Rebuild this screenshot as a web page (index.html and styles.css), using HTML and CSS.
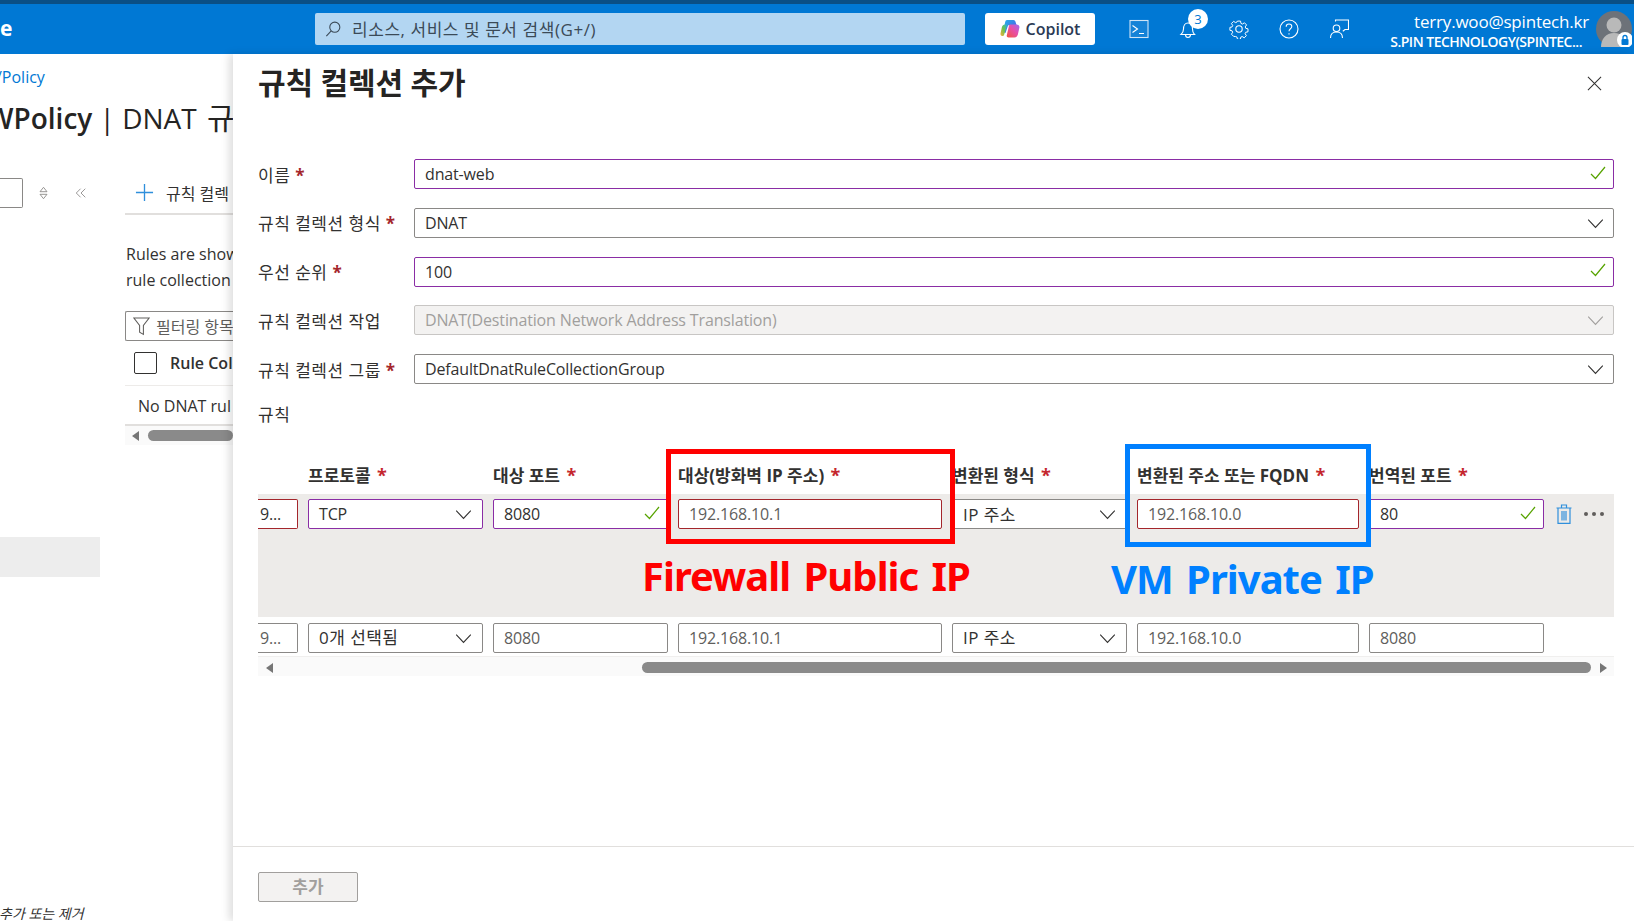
FILE: index.html
```html
<!DOCTYPE html>
<html lang="ko">
<head>
<meta charset="utf-8">
<title>규칙 컬렉션 추가</title>
<link rel="stylesheet" href="styles.css">
</head>
<body>
<div class="strip"></div>
<header class="topbar">
  <div class="brand">e</div>
  <div class="search">
    <svg class="search-icon" viewBox="0 0 20 20"><circle cx="12" cy="8" r="5.6"/><path d="M8 12.2 2.6 18"/></svg>
    <span>리소스, 서비스 및 문서 검색(G+/)</span>
  </div>
  <button class="copilot">
    <svg viewBox="0 0 20 20" class="copilot-logo">
      <defs>
        <linearGradient id="cg1" x1="0" y1="0" x2="1" y2="1"><stop offset="0" stop-color="#1fb6e8"/><stop offset=".55" stop-color="#3f7be8"/><stop offset="1" stop-color="#7a5be0"/></linearGradient>
        <linearGradient id="cg2" x1="0" y1="1" x2="1" y2="0"><stop offset="0" stop-color="#f7b23b"/><stop offset=".5" stop-color="#6cc24a"/><stop offset="1" stop-color="#1fb6e8"/></linearGradient>
        <linearGradient id="cg3" x1="0" y1="1" x2="1" y2="0"><stop offset="0" stop-color="#f0573f"/><stop offset=".55" stop-color="#e84fa8"/><stop offset="1" stop-color="#9b6bf0"/></linearGradient>
      </defs>
      <path d="M7 1h6.500c1 0 1.600.7 2 1.800l1 3.200H9.500C8.400 6 8 6.600 7.700 7.500L5.500 14 3 13 5.200 3C5.500 1.800 6 1 7 1Z" fill="url(#cg1)"/>
      <path d="M5.200 5.500 8 5.500C7 6 6.700 7 6.400 8L4.200 15.500c-.3 1-.9 1.500-1.900 1.500C1 17 .3 15.800.5 14.500L1.800 8.500C2.200 6.700 3.500 5.500 5.200 5.500Z" fill="url(#cg2)"/>
      <path d="M10 5.500h6.200C18 5.500 19.800 6.500 19.400 8.500L18 15c-.4 1.700-1.600 3.500-3.500 3.500H8.500c-1.300 0-2-1-1.700-2.200L8.700 8C9 6.600 9.200 5.500 10 5.500Z" fill="url(#cg3)"/>
    </svg>
    <span>Copilot</span>
  </button>
  <div class="tools">
    <span class="tool">
      <svg viewBox="0 0 20 20"><rect x="1" y="1.500" width="18" height="17"/><path d="M3.500 6.500 8.500 10l-5 3.500M10 14.500h5"/></svg>
    </span>
    <span class="tool">
      <svg viewBox="0 0 20 20"><path d="M2 15.500h13.500c-1.700-1.500-2-3-2-5.500 0-3-1.500-6-4.500-6S4.500 7 4.500 10c0 2.500-.8 4-2.500 5.500ZM6.500 15.500c0 2 1 3 2.500 3s2.500-1 2.500-3"/></svg>
      <span class="badge">3</span>
    </span>
    <span class="tool">
      <svg viewBox="0 0 20 20"><circle cx="10" cy="10" r="3.200"/><path d="M8.300 1.200h3.400l.5 2.600 1.600.7 2.300-1.400 2.300 2.400-1.500 2.200.7 1.600 2.400.5v3.300l-2.500.5-.7 1.600 1.400 2.200-2.400 2.400-2.200-1.400-1.600.6-.5 2.500H8.300l-.5-2.500-1.600-.6L4 18.200l-2.400-2.400L3 13.600l-.7-1.600-2.400-.5V8.200l2.400-.5.7-1.600-1.400-2.200L4 1.500l2.200 1.400 1.600-.7z" transform="translate(1 1) scale(.9)"/></svg>
    </span>
    <span class="tool">
      <svg viewBox="0 0 20 20"><circle cx="10" cy="10" r="9"/><path d="M7.200 7.700C7.200 5.900 8.400 5 10 5s2.800 1 2.800 2.500c0 2.300-2.800 2.300-2.800 4.800"/><path d="M10 14.300v1.200"/></svg>
    </span>
    <span class="tool">
      <svg viewBox="0 0 20 20"><circle cx="7.500" cy="9.300" r="3.300"/><path d="M1.500 19c0-3.800 2.500-6 6-6s6 2.200 6 6M6.500 2.500V1h13v9.500H16l-2.200 1.800"/></svg>
    </span>
  </div>
  <div class="account">
    <div class="email">terry.woo@spintech.kr</div>
    <div class="org">S.PIN TECHNOLOGY(SPINTEC...</div>
  </div>
  <div class="avatar">
    <svg viewBox="0 0 36 36">
      <circle cx="18" cy="18" r="18" fill="#6d7279"/>
      <circle cx="18" cy="14" r="7.500" fill="#b9b9b9"/>
      <path d="M5 36c0-8 5-14 13-14s13 6 13 14z" fill="#b9b9b9"/>
      <circle cx="29" cy="29" r="8" fill="#fff"/>
      <rect x="25.500" y="28" width="7" height="6" rx="1" fill="#0078d4"/>
      <path d="M27 28v-1.500a2 2 0 0 1 4 0V28" fill="none" stroke="#0078d4" stroke-width="1.300"/>
    </svg>
  </div>
</header>

<main class="workspace">
  <section class="blade">
    <div class="crumb">/Policy</div>
    <h1 class="blade-title"><b>WPolicy</b> | DNAT <span class="title-ko">규</span></h1>
    <div class="blade-grid">
      <nav class="side">
        <div class="side-top">
          <span class="side-input"></span>
          <svg class="side-sort" viewBox="0 0 10 16"><path d="M5 1.500 9 6.500H1zM5 14.500 1 9.500h8z"/></svg>
          <svg class="side-collapse" viewBox="0 0 14 12"><path d="M6.500 1 1.500 6l5 5M12 1 7 6l5 5"/></svg>
        </div>
        <div class="side-sel"></div>
        <div class="side-note">추가 또는 제거</div>
      </nav>
      <div class="blade-body">
        <div class="cmdbar">
          <svg class="plus" viewBox="0 0 20 20"><path d="M10 1v18M1 10h18"/></svg>
          <span>규칙 컬렉</span>
        </div>
        <p class="blurb">Rules are show<br>rule collection</p>
        <div class="filter">
          <svg viewBox="0 0 16 18"><path d="M.8 1h14.400L9.800 8v8.500l-3.600-2V8z"/></svg>
          <span>필터링 항목</span>
        </div>
        <div class="list-head"><span class="check"></span><b>Rule Col</b></div>
        <div class="list-empty">No DNAT rul</div>
        <div class="hscroll small">
          <span class="arrow left"></span>
          <span class="thumb"></span>
        </div>
      </div>
    </div>
  </section>

  <section class="panel">
    <div class="panel-head">
      <h2>규칙 컬렉션 추가</h2>
      <svg class="close" viewBox="0 0 16 16"><path d="M1 1l14 14M15 1 1 15"/></svg>
    </div>
    <form class="form">
      <div class="field">
        <label>이름 <i>*</i></label>
        <div class="input valid"><span>dnat-web</span><svg class="ok" viewBox="0 0 16 14"><path d="M1 8l4.500 4.500L15 1"/></svg></div>
      </div>
      <div class="field">
        <label>규칙 컬렉션 형식 <i>*</i></label>
        <div class="input"><span>DNAT</span><svg class="chev" viewBox="0 0 16 10"><path d="M.7.7 8 8.500 15.300.7"/></svg></div>
      </div>
      <div class="field">
        <label>우선 순위 <i>*</i></label>
        <div class="input valid"><span>100</span><svg class="ok" viewBox="0 0 16 14"><path d="M1 8l4.500 4.500L15 1"/></svg></div>
      </div>
      <div class="field">
        <label>규칙 컬렉션 작업</label>
        <div class="input disabled"><span>DNAT(Destination Network Address Translation)</span><svg class="chev" viewBox="0 0 16 10"><path d="M.7.7 8 8.500 15.300.7"/></svg></div>
      </div>
      <div class="field">
        <label>규칙 컬렉션 그룹 <i>*</i></label>
        <div class="input"><span>DefaultDnatRuleCollectionGroup</span><svg class="chev" viewBox="0 0 16 10"><path d="M.7.7 8 8.500 15.300.7"/></svg></div>
      </div>
    </form>
    <div class="rules-label">규칙</div>

    <div class="rules">
      <div class="cols heads">
        <div class="c0"></div>
        <div class="c1">프로토콜 <i>*</i></div>
        <div class="c1">대상 포트 <i>*</i></div>
        <div class="c2">대상(방화벽 IP 주소) <i>*</i></div>
        <div class="c1">변환된 형식 <i>*</i></div>
        <div class="c3">변환된 주소 또는 FQDN <i>*</i></div>
        <div class="c1">번역된 포트 <i>*</i></div>
      </div>
      <div class="active-row">
        <div class="cols">
          <div class="c0 cell err clipcell"><span>9...</span></div>
          <div class="c1 cell valid"><span>TCP</span><svg class="chev" viewBox="0 0 16 10"><path d="M.7.7 8 8.500 15.300.7"/></svg></div>
          <div class="c1 cell valid"><span>8080</span><svg class="ok" viewBox="0 0 16 14"><path d="M1 8l4.500 4.500L15 1"/></svg></div>
          <div class="c2 cell err"><span class="ph">192.168.10.1</span></div>
          <div class="c1 cell"><span class="ko">IP 주소</span><svg class="chev" viewBox="0 0 16 10"><path d="M.7.7 8 8.500 15.300.7"/></svg></div>
          <div class="c3 cell err"><span class="ph">192.168.10.0</span></div>
          <div class="c1 cell valid"><span>80</span><svg class="ok" viewBox="0 0 16 14"><path d="M1 8l4.500 4.500L15 1"/></svg></div>
          <svg class="trash" viewBox="0 0 16 20"><path d="M.5 4h15M5.500 4V1h5v3M2 4v15.300h12V4"/><path d="M6 7v9.500M8 7v9.500M10 7v9.500"/></svg>
          <span class="dots"><b></b><b></b><b></b></span>
        </div>
      </div>
      <div class="cols plain">
        <div class="c0 cell clipcell"><span class="ph">9...</span></div>
        <div class="c1 cell"><span class="ko">0개 선택됨</span><svg class="chev" viewBox="0 0 16 10"><path d="M.7.7 8 8.500 15.300.7"/></svg></div>
        <div class="c1 cell"><span class="ph">8080</span></div>
        <div class="c2 cell"><span class="ph">192.168.10.1</span></div>
        <div class="c1 cell"><span class="ko">IP 주소</span><svg class="chev" viewBox="0 0 16 10"><path d="M.7.7 8 8.500 15.300.7"/></svg></div>
        <div class="c3 cell"><span class="ph">192.168.10.0</span></div>
        <div class="c1 cell"><span class="ph">8080</span></div>
      </div>
      <div class="hscroll wide">
        <span class="arrow left"></span>
        <span class="thumb"></span>
        <span class="arrow right"></span>
      </div>

      <div class="mark mark-red"></div>
      <div class="mark mark-blue"></div>
      <div class="note note-red">Firewall Public IP</div>
      <div class="note note-blue">VM Private IP</div>
    </div>

    <footer class="panel-foot">
      <button class="add" type="button">추가</button>
    </footer>
  </section>
</main>
</body>
</html>
```
FILE: styles.css
```css
* { box-sizing: border-box; }
html, body { margin: 0; height: 921px; overflow: hidden; }
body {
  display: flex;
  flex-direction: column;
  width: 1634px;
  background: #fff;
  color: #323130;
  font-family: "Open Sans", "Noto Sans CJK KR", sans-serif;
  font-size: 16px;
}
.strip { height: 4px; background: #0a4f85; flex: none; }

/* top bar */
.topbar {
  height: 50px;
  flex: none;
  display: flex;
  align-items: center;
  background: #0078d4;
  color: #fff;
}
.brand { width: 315px; font-size: 21px; font-weight: 700; margin-top: -2px; }
.search {
  width: 650px;
  height: 32px;
  display: flex;
  align-items: center;
  background: #b3d6f2;
  border-radius: 2px;
  color: #3b4a57;
  padding: 0 0 1px 9px;
  gap: 10px;
  font-size: 17px;
  letter-spacing: .55px;
}
.search-icon { width: 18px; height: 18px; fill: none; stroke: #3b4a57; stroke-width: 1.2; }
.copilot {
  margin-left: 20px;
  width: 110px;
  height: 32px;
  display: flex;
  align-items: center;
  justify-content: center;
  gap: 6px;
  background: #fff;
  border: 0;
  border-radius: 3px;
  color: #2b3a55;
  font: 600 16px "Open Sans", sans-serif;
}
.copilot-logo { width: 20px; height: 20px; }
.tools { margin-left: 19px; display: flex; }
.tool {
  position: relative;
  width: 50px;
  height: 50px;
  display: flex;
  align-items: center;
  justify-content: center;
}
.tool svg { width: 20px; height: 20px; fill: none; stroke: #fff; stroke-width: 1.1; }
.tool:first-child svg rect { fill: rgba(255,255,255,.08); stroke: #cfe4f6; }
.badge {
  position: absolute;
  left: 24px;
  top: 5px;
  width: 20px;
  height: 20px;
  border-radius: 50%;
  background: #fff;
  color: #0078d4;
  font-size: 13px;
  line-height: 20px;
  text-align: center;
}
.account {
  width: 225px;
  text-align: right;
  padding-top: 3px;
}
.email { font-size: 17px; line-height: 22px; letter-spacing: -.2px; }
.org { font-size: 14px; line-height: 18px; font-weight: 600; padding-right: 7px; letter-spacing: -.5px; white-space: nowrap; }
.avatar { width: 36px; height: 36px; margin-left: 7px; flex: none; }
.avatar svg { display: block; }

/* workspace */
.workspace { flex: 1; min-height: 0; display: flex; }
.blade { width: 233px; flex: none; overflow: hidden; position: relative; }
.crumb { color: #0078d4; font-size: 16px; line-height: 24px; margin: 11px 0 0 -4px; white-space: nowrap; }
.blade-title {
  margin: 9px 0 0 -13px;
  font-size: 28px;
  line-height: 40px;
  font-weight: 400;
  white-space: nowrap;
  color: #252423;
}
.blade-title b { font-weight: 600; }
.title-ko { font-size: 30px; margin-left: 3px; }
.blade-grid { display: flex; margin-top: 39px; }
.side { width: 125px; flex: none; height: 732px; position: relative; }
.side-top { display: flex; align-items: center; height: 30px; margin-top: 1px; }
.side-input { width: 23px; height: 30px; border: 1px solid #8a8886; border-left: 0; border-radius: 0 2px 2px 0; }
.side-sort { width: 9px; height: 14px; margin-left: 16px; fill: none; stroke: #8a8886; stroke-width: 1; }
.side-collapse { width: 12px; height: 12px; margin-left: 27px; fill: none; stroke: #8a8886; stroke-width: 1; }
.side-sel { width: 100px; height: 40px; background: #ededed; margin-top: 329px; }
.side-note { position: absolute; left: -1px; bottom: -14px; font-size: 14px; font-style: italic; white-space: nowrap; line-height: 18px; }
.blade-body { width: 108px; flex: none; }
.cmdbar {
  height: 38px;
  display: flex;
  align-items: center;
  gap: 12px;
  border-bottom: 2px solid #e1dfdd;
  padding: 0 0 5px 10px;
  white-space: nowrap;
}
.plus { width: 19px; height: 19px; fill: none; stroke: #2f8fdc; stroke-width: 1.4; flex: none; }
.blurb { margin: 26px 0 0 1px; line-height: 26px; white-space: nowrap; overflow: hidden; }
.filter {
  margin-top: 18px;
  height: 30px;
  display: flex;
  align-items: center;
  gap: 6px;
  border: 1px solid #8a8886;
  border-right: 0;
  border-radius: 2px 0 0 2px;
  padding-left: 7px;
  color: #605e5c;
  white-space: nowrap;
  overflow: hidden;
}
.filter svg { width: 17px; height: 19px; fill: none; stroke: #605e5c; stroke-width: 1; flex: none; }
.list-head {
  height: 45px;
  display: flex;
  align-items: center;
  gap: 13px;
  padding-left: 9px;
  border-bottom: 1px solid #edebe9;
  white-space: nowrap;
  overflow: hidden;
}
.list-head b { font-weight: 600; }
.check { width: 23px; height: 22px; border: 1px solid #323130; border-radius: 2px; background: #fff; flex: none; }
.list-empty { height: 40px; line-height: 40px; padding-left: 13px; border-bottom: 2px solid #e1dfdd; white-space: nowrap; overflow: hidden; }

/* panel */
.panel {
  flex: 1;
  position: relative;
  background: #fff;
  padding: 0 20px 0 25px;
  box-shadow: -4px 0 8px rgba(0,0,0,.13);
  display: flex;
  flex-direction: column;
}
.panel-head { height: 105px; display: flex; justify-content: space-between; padding-top: 9px; }
.panel-head h2 { margin: 0; font-size: 30px; line-height: 40px; font-weight: 700; color: #252423; letter-spacing: -.15px; }
.close { width: 15px; height: 15px; margin: 13px 12px 0 0; fill: none; stroke: #323130; stroke-width: 1.1; }
.form { display: flex; flex-direction: column; gap: 18.75px; }
.field { display: flex; align-items: center; height: 30px; }
.field label { width: 156px; flex: none; font-size: 17px; color: #323130; white-space: nowrap; letter-spacing: .5px; }
i { color: #a4262c; font-style: normal; font-weight: 700; }
.input, .cell {
  display: flex;
  align-items: center;
  justify-content: space-between;
  height: 30px;
  border: 1px solid #8a8886;
  border-radius: 2px;
  background: #fff;
  padding: 0 7px 0 10px;
  white-space: nowrap;
  overflow: hidden;
  letter-spacing: -.15px;
}
.ko { font-size: 17px; letter-spacing: .45px; margin-top: -2px; }
.input { flex: 1; }
.valid { border-color: #8a2da5; }
.disabled { background: #f3f2f1; color: #a19f9d; border-color: #c8c6c4; }
.disabled .chev { stroke: #a19f9d; }
.ok { width: 16px; height: 14px; fill: none; stroke: #57a300; stroke-width: 1.2; flex: none; margin-top: -3px; }
.chev { width: 17px; height: 10px; fill: none; stroke: #323130; stroke-width: 1.1; flex: none; margin: 2px 2px 0 0; }
.cell .chev { margin-right: 3px; }
.rules-label { margin-top: 16px; line-height: 30px; font-size: 17px; letter-spacing: .5px; }

/* rule grid */
.rules { position: relative; margin-top: 29px; }
.cols { display: flex; gap: 10px; align-items: center; }
.heads { height: 35px; font-weight: 700; font-size: 17px; white-space: nowrap; color: #323130; align-items: flex-start; padding-top: 4px; line-height: 24px; }
.heads i { color: #c4262e; font-size: 18px; margin-left: 2px; }
.c0 { width: 40px; flex: none; }
.c1 { width: 175px; flex: none; }
.c2 { width: 264px; flex: none; }
.c3 { width: 222px; flex: none; }
.active-row { height: 123px; background: #edebe9; padding-top: 5px; }
.plain { padding-top: 6px; padding-bottom: 4px; border-bottom: 1px solid #f0efee; height: 40px; }
.err { border-color: #a4262c; }
.clipcell { border-left: 0; padding-left: 2px; border-radius: 0 2px 2px 0; }
.ph { color: #605e5c; }
.trash { width: 16px; height: 20px; flex: none; margin-left: 2px; fill: none; stroke: #2f8fdc; stroke-width: 1.2; }
.dots { display: flex; gap: 4px; margin-left: 2px; }
.dots b { width: 4px; height: 4px; border-radius: 50%; background: #605e5c; }

.hscroll {
  height: 19px;
  background: #fafafa;
  position: relative;
  display: flex;
  align-items: center;
}
.hscroll.wide { padding-top: 2px; }
.hscroll .thumb {
  position: absolute;
  left: 384px;
  right: 23px;
  height: 11px;
  border-radius: 6px;
  background: #8a8a8a;
}
.arrow { position: absolute; width: 0; height: 0; border: 5px solid transparent; }
.arrow.left { left: 8px; border-right: 7px solid #767676; border-left: 0; }
.arrow.right { right: 7px; border-left: 7px solid #767676; border-right: 0; }
.hscroll.small .thumb { left: 23px; right: 0; }
.hscroll.small .arrow.left { left: 7px; }

/* annotations laid over the grid */
.mark { position: absolute; border: 5px solid; pointer-events: none; }
.mark-red { left: 408px; top: -10px; width: 289px; height: 95px; border-color: #ff0000; }
.mark-blue { left: 867px; top: -15px; width: 246px; height: 103px; border-color: #0080ff; }
.note { position: absolute; font-family: "Noto Sans", "Open Sans", sans-serif; font-weight: 700; font-size: 40px; line-height: 50px; white-space: nowrap; letter-spacing: -1px; word-spacing: 4px; }
.note-red { left: 384px; top: 92px; color: #ff0000; }
.note-blue { left: 853px; top: 95px; color: #0080ff; }

.panel-foot {
  margin: auto -20px 0 -25px;
  height: 75px;
  border-top: 1px solid #e1dfdd;
  padding: 25px 0 0 25px;
}
.add {
  width: 100px;
  height: 30px;
  border: 1px solid #a19f9d;
  border-radius: 2px;
  background: #f3f2f1;
  color: #a19f9d;
  font: 700 17px "Open Sans", "Noto Sans CJK KR", sans-serif;
  padding: 0 0 3px;
}
```
